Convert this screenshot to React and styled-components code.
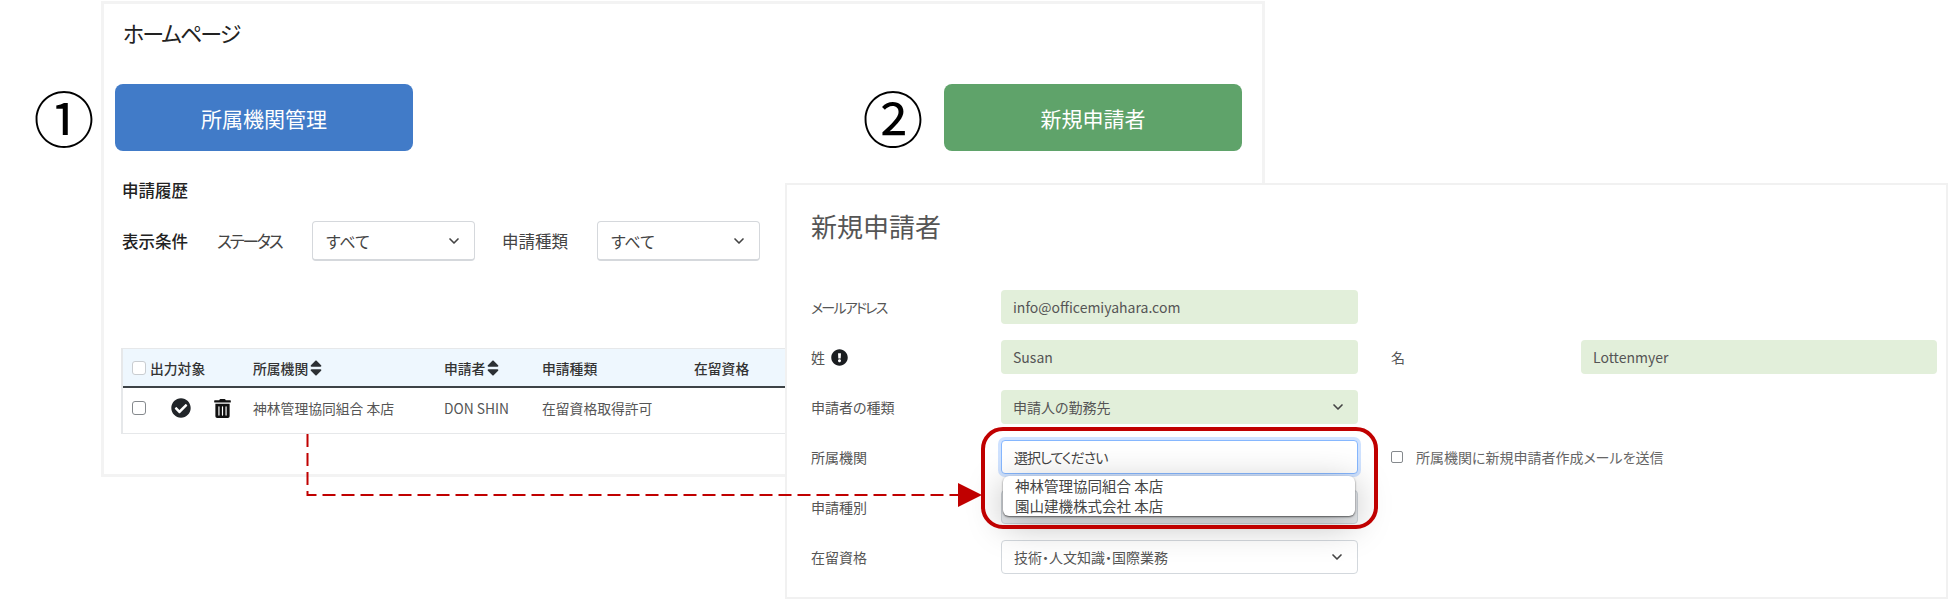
import styled, { createGlobalStyle } from "styled-components";
import { FaCheckCircle, FaExclamationCircle, FaSort, FaTrashAlt } from "react-icons/fa";
import { LuChevronDown } from "react-icons/lu";

const Global = createGlobalStyle`
    html, body {
        margin: 0;
        background: #fff;
    }
    * {
        box-sizing: border-box;
    }
`

const Page = styled.div`
    position: relative;
    width: 1950px;
    height: 600px;
    overflow: hidden;
    background: #fff;
    color: #333;
    font-family: "Noto Sans CJK JP", "Noto Sans", sans-serif;
    font-feature-settings: "palt";
`
//Meiryo UI kana run narrower than Noto
const Kana = styled.span`
    letter-spacing: ${({ $s }) => $s || "-0.13em"};
`

//Home panel
const HomePanel = styled.section`
    width: 1164px;
    height: 476px;
    margin: 1px 0 0 101px;
    padding: 0 20px 0 11px;
    border: 3px solid #f3f3f3;
`
const HomeTitle = styled.h1`
    margin: 0 0 0 8px;
    height: 80px;
    padding-top: 11px;
    font-size: 22px;
    line-height: 34px;
    font-weight: 400;
    color: #222;
`
const ButtonRow = styled.div`
    display: flex;
    justify-content: space-between;
`
const MarkedButton = styled.div`
    position: relative;
`
const Marker = styled.span`
    position: absolute;
    right: calc(100% + 21px);
    top: 3px;
    width: 60px;
    height: 60px;
    display: flex;
    align-items: center;
    justify-content: center;
    font-size: 61px;
    line-height: 60px;
    color: #000;
`
const BigButton = styled.div`
    width: ${({ $w }) => $w}px;
    height: 67px;
    display: flex;
    align-items: center;
    justify-content: center;
    border-radius: 8px;
    background: ${({ $bg }) => $bg};
    color: #fff;
    font-size: 21px;
`
const SectionTitle = styled.h2`
    margin: 25px 0 0 7px;
    font-size: 16.5px;
    line-height: 28px;
    font-weight: 500;
    color: #222;
`
const FilterRow = styled.div`
    display: flex;
    align-items: center;
    height: 40px;
    margin: 17px 0 0 7px;
`
const FilterHeading = styled.span`
    width: 95px;
    font-size: 16.5px;
    font-weight: 500;
    color: #222;
`
const FilterLabel = styled.span`
    width: ${({ $w }) => $w}px;
    font-size: 16.5px;
    color: #444;
`
const FilterSelect = styled.div`
    width: 163px;
    height: 40px;
    display: flex;
    align-items: center;
    justify-content: space-between;
    padding: 0 12px 0 13px;
    margin-right: ${({ $mr }) => $mr}px;
    border: 1px solid #d5d8dc;
    border-bottom-width: 2px;
    border-radius: 4px;
    font-size: 16px;
    color: #444;
`
const Table = styled.div`
    width: 1140px;
    margin: 87px 0 0 6px;
    border: 1px solid #e6e8ea;
    border-width: 1px 1px 1px 2px;
    font-size: 13.8px;
`
const HeadRow = styled.div`
    display: grid;
    grid-template-columns: 130px 191px 98px 152px 1fr;
    align-items: center;
    height: 39px;
    background: #eef7fe;
    border-bottom: 2px solid #3d4347;
    font-weight: 500;
    color: #333;
`
const BodyRow = styled.div`
    display: grid;
    grid-template-columns: 130px 191px 98px 152px 1fr;
    align-items: center;
    height: 45px;
    padding-bottom: 5px;
    color: #555;
`
const HeadCell = styled.div`
    display: flex;
    align-items: center;
    gap: 2px;
`
const SelectCell = styled.div`
    display: flex;
    align-items: center;
    gap: ${({ $gap }) => $gap || 0}px;
    padding-left: 9px;
`
const CheckBox = styled.span`
    flex: none;
    width: 14px;
    height: 14px;
    border: 1px solid ${({ $pale }) => ($pale ? "#c9cdd1" : "#85898d")};
    border-radius: 3px;
    background: #fff;
`
const ActionCheck = styled(FaCheckCircle)`
    width: 20px;
    height: 20px;
    margin-left: 25px;
    color: #212529;
`
const ActionTrash = styled(FaTrashAlt)`
    width: 17px;
    height: 19px;
    margin-left: 23px;
    color: #111;
`
const SortIcon = styled(FaSort)`
    width: 12px;
    height: 20px;
    color: #2c3034;
`

//New applicant panel
const FormPanel = styled.section`
    position: absolute;
    z-index: 2;
    left: 785px;
    top: 183px;
    width: 1163px;
    height: 416px;
    padding: 0 10px 0 24px;
    background: #fff;
    border: 2px solid #f1f1f1;
`
const FormTitle = styled.h2`
    height: 105px;
    margin: 0;
    padding-top: 23px;
    font-size: 26px;
    line-height: 36px;
    font-weight: 400;
    color: #555;
`
const FormGrid = styled.div`
    display: grid;
    grid-template-columns: 190px 357px 33px 190px 356px;
    grid-auto-rows: 34px;
    row-gap: 16px;
    align-items: center;
`
const FormLabel = styled.label`
    display: flex;
    align-items: center;
    gap: 6px;
    font-size: 14px;
    color: #555;
`
const InfoIcon = styled(FaExclamationCircle)`
    width: 17px;
    height: 17px;
    color: #1a1d20;
`
const FieldBox = styled.div`
    height: 34px;
    display: flex;
    align-items: center;
    justify-content: space-between;
    padding: 0 12px;
    border-radius: 4px;
    background: #e2efda;
    font-size: 14px;
    color: #555;
`
const SelectBox = styled(FieldBox)`
    background: ${({ $plain }) => ($plain ? "#fff" : "#e2efda")};
    border: ${({ $plain }) => ($plain ? "1px solid #d3d8dd" : "none")};
`
const MutedBox = styled(FieldBox)`
    background: #e9ecef;
    border: 1px solid #ced4da;
`
const RowFiller = styled.div`
    grid-column: 3 / span 3;
`
const FocusWrap = styled.div`
    position: relative;
`
const FocusBox = styled(FieldBox)`
    background: #fff;
    border: 1px solid #86b7fe;
    box-shadow: 0 0 0 3px rgba(13, 110, 253, 0.2);
    color: #444;
`
const Dropdown = styled.ul`
    position: absolute;
    z-index: 3;
    left: 2px;
    right: 3px;
    top: 36px;
    height: 40px;
    margin: 0;
    padding: 0 0 0 12px;
    list-style: none;
    background: #fff;
    border-radius: 6px;
    box-shadow: 0 1px 2px rgba(0, 0, 0, 0.6), 0 8px 36px rgba(0, 0, 0, 0.28);
    font-size: 14.5px;
    line-height: 20px;
    color: #444;
`
const Highlight = styled.div`
    position: absolute;
    z-index: 4;
    inset: -13px -20px -55px -20px;
    border: 4px solid #c00000;
    border-radius: 22px;
    pointer-events: none;
`
const MailOption = styled.div`
    display: flex;
    align-items: center;
    gap: 13px;
    font-size: 14px;
    color: #666;
    grid-column: 4 / span 2;
`
const SmallCheck = styled.span`
    width: 12px;
    height: 12px;
    border: 1px solid #85898d;
    border-radius: 2px;
`
const Chevron = styled(LuChevronDown)`
    width: 16px;
    height: 16px;
    stroke-width: 2.5;
    color: #444;
`
const ArrowLayer = styled.svg`
    position: absolute;
    z-index: 5;
    left: 0;
    top: 0;
    pointer-events: none;
`

const App = () => {
    return (
        <Page>
            <Global />
            <HomePanel>
                <HomeTitle><Kana $s="-0.09em">ホームページ</Kana></HomeTitle>
                <ButtonRow>
                    <MarkedButton>
                        <Marker>①</Marker>
                        <BigButton $w={298} $bg="#417bc8">所属機関管理</BigButton>
                    </MarkedButton>
                    <MarkedButton>
                        <Marker>②</Marker>
                        <BigButton $w={298} $bg="#5fa36a">新規申請者</BigButton>
                    </MarkedButton>
                </ButtonRow>
                <SectionTitle>申請履歴</SectionTitle>
                <FilterRow>
                    <FilterHeading>表示条件</FilterHeading>
                    <FilterLabel $w={95}><Kana>ステータス</Kana></FilterLabel>
                    <FilterSelect $mr={27}>すべて<Chevron /></FilterSelect>
                    <FilterLabel $w={95}>申請種類</FilterLabel>
                    <FilterSelect>すべて<Chevron /></FilterSelect>
                </FilterRow>
                <Table>
                    <HeadRow>
                        <SelectCell $gap={4}>
                            <CheckBox $pale />
                            <HeadCell>出力対象</HeadCell>
                        </SelectCell>
                        <HeadCell>所属機関<SortIcon /></HeadCell>
                        <HeadCell>申請者<SortIcon /></HeadCell>
                        <HeadCell>申請種類</HeadCell>
                        <HeadCell>在留資格</HeadCell>
                    </HeadRow>
                    <BodyRow>
                        <SelectCell>
                            <CheckBox />
                            <ActionCheck />
                            <ActionTrash />
                        </SelectCell>
                        <div>神林管理協同組合 本店</div>
                        <div>DON SHIN</div>
                        <div>在留資格取得許可</div>
                        <div />
                    </BodyRow>
                </Table>
            </HomePanel>

            <FormPanel>
                <FormTitle>新規申請者</FormTitle>
                <FormGrid>
                    <FormLabel><Kana>メールアドレス</Kana></FormLabel>
                    <FieldBox>info@officemiyahara.com</FieldBox>
                    <RowFiller />

                    <FormLabel>姓 <InfoIcon /></FormLabel>
                    <FieldBox>Susan</FieldBox>
                    <div />
                    <FormLabel>名</FormLabel>
                    <FieldBox>Lottenmyer</FieldBox>

                    <FormLabel>申請者の種類</FormLabel>
                    <SelectBox>申請人の勤務先<Chevron /></SelectBox>
                    <RowFiller />

                    <FormLabel>所属機関</FormLabel>
                    <FocusWrap>
                        <FocusBox><Kana $s="-0.07em">選択してください</Kana></FocusBox>
                        <Dropdown>
                            <li>神林管理協同組合 本店</li>
                            <li>園山建機株式会社 本店</li>
                        </Dropdown>
                        <Highlight />
                    </FocusWrap>
                    <div />
                    <MailOption>
                        <SmallCheck />
                        所属機関に新規申請者作成メールを送信
                    </MailOption>

                    <FormLabel>申請種別</FormLabel>
                    <MutedBox />
                    <RowFiller />

                    <FormLabel>在留資格</FormLabel>
                    <SelectBox $plain>技術・人文知識・国際業務<Chevron /></SelectBox>
                </FormGrid>
            </FormPanel>

            <ArrowLayer width="1950" height="600" viewBox="0 0 1950 600">
                <path d="M307.5 434 V495 H960" fill="none" stroke="#c00000" strokeWidth="2" strokeDasharray="13 6" />
                <polygon points="958,483 982,495 958,507" fill="#c00000" />
            </ArrowLayer>
        </Page>
    )
}

export default App;
